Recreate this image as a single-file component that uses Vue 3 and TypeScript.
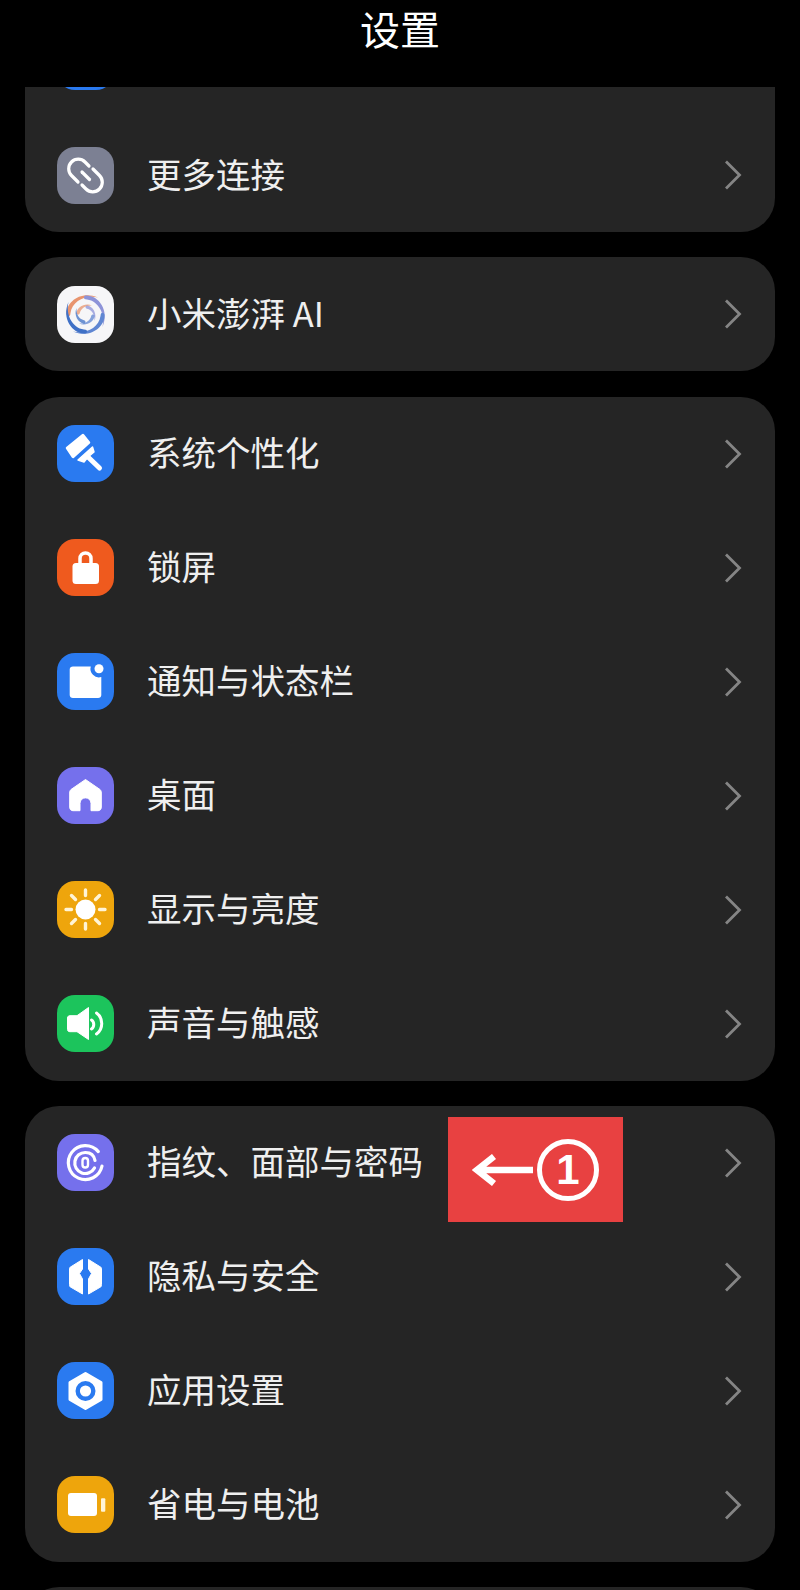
<template>
  <div class="screen">
    <header class="title-bar">设置</header>
    <div class="scroll">
      <section v-for="(group, g) in groups" :key="g" class="card">
        <div v-for="(row, r) in group" :key="r" class="row">
          <span class="icon" :style="{ background: row.color }">
            <svg viewBox="0 0 57 57" width="57" height="57" v-html="row.svg"></svg>
          </span>
          <span class="label">{{ row.label }}</span>
          <svg class="chevron" viewBox="0 0 18 30" width="18" height="30">
            <path d="M2 1.500 L15.500 15 L2 28.500" fill="none" stroke="#858585" stroke-width="2.800" />
          </svg>
        </div>
      </section>
    </div>
    <div class="callout">
      <svg viewBox="0 0 62 32" width="62" height="32">
        <path d="M61 16 H6 M22 2.500 L5 16 L22 29.500" fill="none" stroke="#fff" stroke-width="6.500" />
      </svg>
      <span class="step">1</span>
    </div>
  </div>
</template>

<script setup lang="ts">
interface Row {
  label: string
  color: string
  svg: string
}

const W = '#ffffff'
const BLUE = '#2a7af0'
const PURPLE = '#7570ec'
const AMBER = '#eea50c'

// one swirl blade of the AI logo, rotated round the centre for the other three
const blade = (color: string, deg: number) =>
  `<g fill="${color}" transform="rotate(${deg} 28.500 28.500)">
    <path d="M9.500 28 C9 16 24 4 41 11.500 C29 8.500 15 15 13.500 27 C13.300 29.500 12.800 30 11.500 30 C10.500 30 9.600 29.500 9.500 28 Z" />
    <path d="M19.500 27 C20 21 28 16.500 35 19.500 C29 19 24 22 22.800 27 C22.300 29 19.700 29 19.500 27 Z" opacity=".75" />
  </g>`

const groups: Row[][] = [
  [
    // only the bottom edge of this icon shows under the title bar
    { label: '', color: BLUE, svg: '' },
    {
      label: '更多连接',
      color: '#7c8093',
      svg: `<g fill="none" stroke="${W}" stroke-width="3.200" stroke-linecap="round">
        <path d="M32 19 L28 15 A9.500 9.500 0 0 0 14.500 28.500 L21 35" />
        <path d="M25 38 L29 42 A9.500 9.500 0 0 0 42.500 28.500 L36 22" />
        <path d="M25 25 L32.500 32.500" /></g>`,
    },
  ],
  [
    {
      label: '小米澎湃 AI',
      color: '#f6f6f8',
      svg: blade('#e8946e', 0) + blade('#8d93d8', 90) + blade('#5f86d2', 180) + blade('#3f70c6', 270),
    },
  ],
  [
    {
      label: '系统个性化',
      color: BLUE,
      svg: `<g fill="${W}" stroke="${W}" stroke-linejoin="round" stroke-linecap="round">
        <path d="M10 23 L26 10 L32 17.500 L16 32 Z" stroke-width="2.500" />
        <path d="M21 35 L35.500 22 L37 27 L31 32 L27 37 Z" stroke-width="1.500" />
        <path d="M31 32 L42.500 43" fill="none" stroke-width="5" /></g>`,
    },
    {
      label: '锁屏',
      color: '#ef5a1e',
      svg: `<path d="M23 26 V19.500 A5.500 5.500 0 0 1 34 19.500 V26" fill="none" stroke="${W}" stroke-width="3.500" />
        <rect x="15.500" y="24" width="26.500" height="21" rx="3.500" fill="${W}" />`,
    },
    {
      label: '通知与状态栏',
      color: BLUE,
      svg: `<path d="M16 13.500 H33.800 A8.500 8.500 0 0 0 44.300 24 V42 C44.300 44 43 45 41 45 H16 C14 45 12.700 44 12.700 42 V16.500 C12.700 14.500 14 13.500 16 13.500 Z" fill="${W}" />
        <circle cx="42" cy="15.700" r="4.500" fill="${W}" />`,
    },
    {
      label: '桌面',
      color: PURPLE,
      svg: `<path d="M28.500 12.500 L43 22.500 C44 23.500 44.300 24.500 44.300 26 V40 C44.300 42.500 43 43.700 41 43.700 H34 V36.500 C34 29 23 29 23 36.500 V43.700 H16 C14 43.700 12.700 42.500 12.700 40 V26 C12.700 24.500 13 23.500 14 22.500 Z" fill="${W}" stroke="${W}" stroke-width="1" stroke-linejoin="round" />`,
    },
    {
      label: '显示与亮度',
      color: AMBER,
      svg: `<circle cx="28.500" cy="28.500" r="10" fill="${W}" />
        <path d="M28.500 9 V14.500 M28.500 42.500 V48 M9 28.500 H14.500 M42.500 28.500 H48 M14.500 14.500 L18.500 18.500 M38.500 38.500 L42.500 42.500 M42.500 14.500 L38.500 18.500 M18.500 38.500 L14.500 42.500" stroke="#fff4d6" stroke-width="3.400" stroke-linecap="round" />`,
    },
    {
      label: '声音与触感',
      color: '#1cc45c',
      svg: `<path d="M10.500 23 C10.500 21.500 11.500 20.700 13 20.700 H20 L31.500 12.500 V44.500 L20 36.700 H13 C11.500 36.700 10.500 36 10.500 34.500 Z" fill="${W}" stroke="${W}" stroke-linejoin="round" />
        <path d="M34.500 25 C37.500 27 37.500 32 34.500 34 M39.500 18 C46.500 23 46.500 34 39.500 39" fill="none" stroke="${W}" stroke-width="3" stroke-linecap="round" />`,
    },
  ],
  [
    {
      label: '指纹、面部与密码',
      color: PURPLE,
      svg: `<g fill="none" stroke="${W}" stroke-linecap="round">
        <path d="M41.300 17.600 A17 17 0 1 0 45 32" stroke-width="3.200" />
        <path d="M38 26.500 C37 21 33 18.500 28.500 18.500 A10.500 10.500 0 1 0 37.500 34" stroke-width="3.200" />
        <rect x="25.500" y="24" width="5.500" height="9.500" rx="2.750" stroke-width="2.400" /></g>`,
    },
    {
      label: '隐私与安全',
      color: BLUE,
      svg: `<g fill="${W}" stroke="${W}" stroke-linejoin="round">
        <path d="M25.500 11.500 V21 L22.500 25.500 L25.500 31 V46 L13.500 39 C12.500 38.500 12.500 38 12.500 36.500 V21 C12.500 20 12.500 19.500 13.500 19 Z" />
        <path d="M31.500 11.500 V21 L34.500 25.500 L31.500 31 V46 L43.500 39 C44.500 38.500 44.500 38 44.500 36.500 V21 C44.500 20 44.500 19.500 43.500 19 Z" /></g>`,
    },
    {
      label: '应用设置',
      color: BLUE,
      svg: `<path d="M28.500 11.500 L44 20.500 V37.500 L28.500 46.500 L13 37.500 V20.500 Z" fill="${W}" stroke="${W}" stroke-width="3" stroke-linejoin="round" />
        <circle cx="28.500" cy="29" r="7.800" fill="none" stroke="${BLUE}" stroke-width="4.400" />`,
    },
    {
      label: '省电与电池',
      color: AMBER,
      svg: `<rect x="11" y="17" width="29" height="23" rx="3" fill="${W}" />
        <rect x="44" y="22.300" width="4.300" height="13.400" rx="1" fill="#fff4d6" />`,
    },
  ],
  [{ label: '', color: 'transparent', svg: '' }],
]
</script>

<style scoped>
.screen {
  position: relative;
  width: 800px;
  height: 1590px;
  overflow: hidden;
  background: #000;
  font-family: "Noto Sans CJK SC", "Noto Sans", sans-serif;
  color: #efefef;
}

.title-bar {
  position: relative;
  z-index: 1;
  height: 87px;
  text-align: center;
  font-size: 40px;
  line-height: 57px;
  color: #fff;
  background: #000;
}

.scroll {
  display: flex;
  flex-direction: column;
  gap: 25.25px;
  padding: 0 25px;
  margin-top: -83px; /* list is scrolled, first row sits under the title */
}

.card {
  background: #252525;
  border-radius: 34px;
}

.row {
  display: flex;
  align-items: center;
  height: 114px;
  padding: 0 33px 0 32px;
}

.icon {
  flex: none;
  display: block;
  width: 57px;
  height: 57px;
  border-radius: 18px;
}

.icon svg {
  display: block;
}

.label {
  flex: 1;
  margin-left: 33px;
  padding-bottom: 5px;
  font-size: 34.500px;
  line-height: 40px;
}

.chevron {
  flex: none;
}

.callout {
  position: absolute;
  left: 448px;
  top: 1117px;
  width: 175px;
  height: 105px;
  display: flex;
  align-items: center;
  justify-content: center;
  gap: 3px;
  background: #e84141;
}

.step {
  flex: none;
  display: flex;
  align-items: center;
  justify-content: center;
  width: 62px;
  height: 62px;
  box-sizing: border-box;
  border: 5px solid #fff;
  border-radius: 50%;
  font-size: 42px;
  font-weight: 700;
  color: #fff;
  font-family: "Liberation Sans", sans-serif;
}
</style>
